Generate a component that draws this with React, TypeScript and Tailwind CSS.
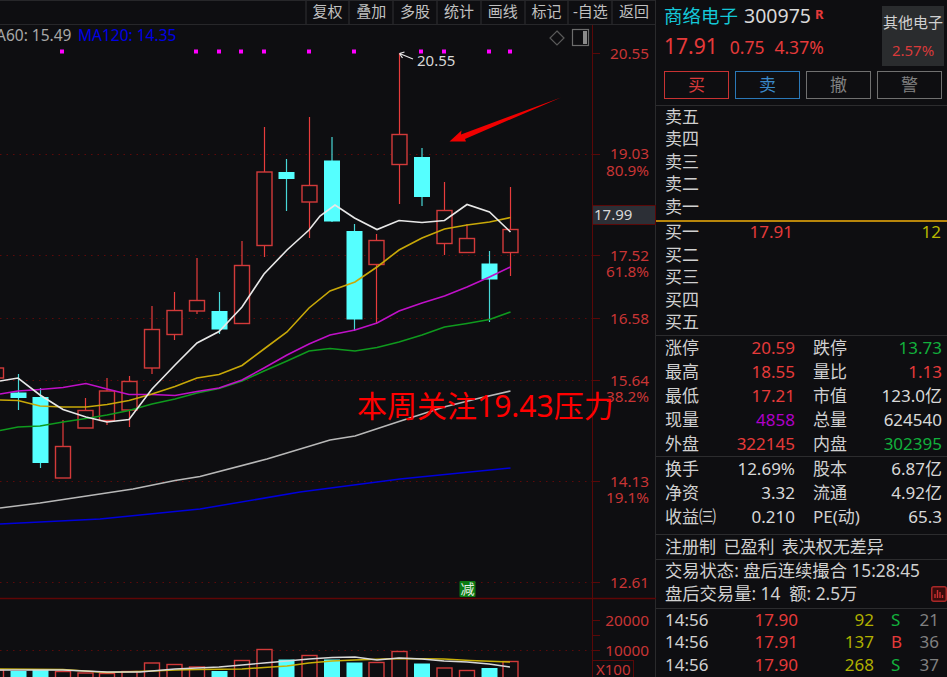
import React from 'react';

interface Candle {
  x: number;
  top: number;
  bottom: number;
  hi: number;
  lo: number;
  up: boolean;
}

const candles: Candle[] = [
  { x: -4, top: 368, bottom: 378, hi: 368, lo: 378, up: true },
  { x: 18.5, top: 392.5, bottom: 398, hi: 374, lo: 410, up: false },
  { x: 40.5, top: 397, bottom: 463, hi: 388, lo: 468, up: false },
  { x: 63, top: 446.5, bottom: 478, hi: 420, lo: 478, up: true },
  { x: 85.5, top: 410.5, bottom: 428, hi: 398, lo: 428, up: true },
  { x: 107, top: 391, bottom: 420.5, hi: 378, lo: 425, up: true },
  { x: 129.5, top: 381.5, bottom: 410, hi: 376, lo: 427, up: true },
  { x: 152, top: 329.5, bottom: 368, hi: 306, lo: 374, up: true },
  { x: 174.5, top: 310.5, bottom: 334.5, hi: 292, lo: 340, up: true },
  { x: 197, top: 300.5, bottom: 311, hi: 258, lo: 314, up: true },
  { x: 219.5, top: 311, bottom: 329.5, hi: 292, lo: 334, up: false },
  { x: 242, top: 265.5, bottom: 323.5, hi: 241, lo: 323, up: true },
  { x: 264.5, top: 172, bottom: 245.5, hi: 127, lo: 257, up: true },
  { x: 286.5, top: 172, bottom: 179, hi: 159, lo: 211, up: false },
  { x: 309.5, top: 185.5, bottom: 202, hi: 117, lo: 238, up: true },
  { x: 332, top: 160.5, bottom: 221.5, hi: 137, lo: 222, up: false },
  { x: 354.5, top: 231, bottom: 319.5, hi: 224, lo: 331, up: false },
  { x: 376.5, top: 240.5, bottom: 264.5, hi: 234, lo: 323, up: true },
  { x: 399.5, top: 134.5, bottom: 164.5, hi: 53, lo: 204, up: true },
  { x: 422, top: 157, bottom: 197, hi: 148, lo: 206, up: false },
  { x: 444.5, top: 210.5, bottom: 243.5, hi: 182, lo: 255, up: true },
  { x: 467, top: 238.5, bottom: 252.5, hi: 224, lo: 252, up: true },
  { x: 489.5, top: 263.5, bottom: 279.5, hi: 251, lo: 322, up: false },
  { x: 510.5, top: 229.5, bottom: 252.5, hi: 187, lo: 276, up: true },
];

const volumeTops = [670, 671, 670, 671.5, 673, 673.5, 671.5, 663, 664.5, 667, 671, 660.5, 649.5, 659.5, 655.5, 659.5, 662.5, 662.5, 651.5, 663.5, 668, 670.5, 668, 661.5];

const ma5 = '0,381 18,378 40,395 63,409.5 86,417 107,422 129,419.5 152,389 175,365 197,343 219,331.5 242,307 264,274 287,250 309,230 320,216 335,205 354.5,218 377,229.5 399,220.5 422,222.5 444.5,220.5 467,204.5 489.5,212 510.5,232';
const ma10 = '0,400 18,400.5 40,406 63,407 86,407 107,404.5 129,400.5 152,394 175,386.5 197,378 219,374.5 242,365.5 264,349 287,332 309,308 330,291 355,282 377,267 399,250 422,238 444.5,229 467,225 489.5,222 510.5,217.5';
const ma20 = '0,394 18,391 40,389.5 63,387.5 86,383.5 107,389 129,394.5 152,394.5 175,395.5 197,391.5 219,388 242,380 264,368 287,355 309,344 330,335 355,330 377,323 399,311 422,303 444.5,296 467,287 489.5,277 510.5,267';
const ma30 = '0,430.5 18,427 40,426 63,422 86,418.5 107,415 129,410.5 152,404 175,399 197,393 219,388.5 242,381 264,371 287,361 309,351 330,348.5 355,351 377,347.5 399,342 422,335 444.5,327 467,323.5 489.5,319.5 510.5,312';
const ma60 = '0,508 40,503 80,497 133,489 175,480.5 200,476.5 267,459 330,440 355,436 399,421.5 444,407 480,398 510.5,391';
const ma120 = '0,524 100,519 200,509 300,492 400,479 510.5,468';
const volWhite = '0,670 40,670 63,670 85,671 107,672 140,672 175,669 197,668 219,667 242,665 264,663 287,661 309,659 332,657.5 355,657 377,660 399,658 422,659 444,661 467,662 489,664 510,667';
const volYellow = '0,669 63,669.5 85,671 107,672.5 152,671 175,670 197,669.5 242,669 264,667.5 287,666 309,663 332,661 355,660 399,658.5 444,659 470,660.5 510,662';

const dots = [62, 196, 219, 241, 264, 309, 354, 421, 444, 489, 510];
const gridLines = [154.5, 255.5, 318.5, 380.5, 481.5, 582.5, 650.5];
const axisLabels: [string, number][] = [
  ['20.55', 53], ['19.03', 153], ['80.9%', 170], ['17.52', 255], ['61.8%', 271], ['16.58', 318],
  ['15.64', 380], ['38.2%', 396], ['14.13', 481], ['19.1%', 497], ['12.61', 582], ['20000', 620], ['10000', 650],
];
const axisTicks = [53, 154, 255, 318, 380, 481, 582, 620, 635, 650];

const tools = ['复权', '叠加', '多股', '统计', '画线', '标记', '-自选', '返回'];

const stats1 = [
  ['涨停', '20.59', 'text-[#e53a3a]', '跌停', '13.73', 'text-[#12b03c]'],
  ['最高', '18.55', 'text-[#e53a3a]', '量比', '1.13', 'text-[#e53a3a]'],
  ['最低', '17.21', 'text-[#e53a3a]', '市值', '123.0亿', 'text-[#d8d8d8]'],
  ['现量', '4858', 'text-[#b000c8]', '总量', '624540', 'text-[#d8d8d8]'],
  ['外盘', '322145', 'text-[#e53a3a]', '内盘', '302395', 'text-[#12b03c]'],
];
const stats2 = [
  ['换手', '12.69%', 'text-[#d8d8d8]', '股本', '6.87亿', 'text-[#d8d8d8]'],
  ['净资', '3.32', 'text-[#d8d8d8]', '流通', '4.92亿', 'text-[#d8d8d8]'],
  ['收益㈢', '0.210', 'text-[#d8d8d8]', 'PE(动)', '65.3', 'text-[#d8d8d8]'],
];
const ticks = [
  ['14:56', '17.90', '92', 'S', '21'],
  ['14:56', '17.91', '137', 'B', '36'],
  ['14:56', '17.90', '268', 'S', '37'],
];

const Chart = () => (
  <svg viewBox="0 25 656 652" width={656} height={652} className="block">
    {gridLines.map((y) => (
      <line key={y} x1={0} x2={592} y1={y} y2={y} stroke="#5c0a0a" strokeWidth={1} strokeDasharray="1.5 5" />
    ))}
    <line x1={592.5} x2={592.5} y1={25} y2={677} stroke="#5a0808" />
    <line x1={0} x2={656} y1={598.5} y2={598.5} stroke="#5f0606" strokeWidth={1.3} />
    {axisTicks.map((y) => (
      <line key={y} x1={592} x2={600} y1={y + 0.5} y2={y + 0.5} stroke="#5a0808" />
    ))}
    {dots.map((x) => (
      <rect key={x} x={x - 2} y={49.5} width={4} height={4} fill="#ff00ff" />
    ))}
    {candles.map((c) =>
      c.up ? (
        <g key={c.x}>
          <line x1={c.x} x2={c.x} y1={c.hi} y2={c.top} stroke="#e83c3c" strokeWidth={1.2} />
          <line x1={c.x} x2={c.x} y1={c.bottom} y2={c.lo} stroke="#e83c3c" strokeWidth={1.2} />
          <rect x={c.x - 7.5} y={c.top} width={15} height={c.bottom - c.top} fill="#0e0e11" stroke="#d23a3a" strokeWidth={1.4} />
        </g>
      ) : (
        <g key={c.x}>
          <line x1={c.x} x2={c.x} y1={c.hi} y2={c.lo} stroke="#48d8d8" strokeWidth={1.2} />
          <rect x={c.x - 8} y={c.top} width={16} height={c.bottom - c.top} fill="#55ffff" />
        </g>
      ),
    )}
    <polyline points={ma120} fill="none" stroke="#0000dc" strokeWidth={1.6} />
    <polyline points={ma60} fill="none" stroke="#b8b8b8" strokeWidth={1.6} />
    <polyline points={ma30} fill="none" stroke="#0f9a1e" strokeWidth={1.6} />
    <polyline points={ma20} fill="none" stroke="#c010c8" strokeWidth={1.6} />
    <polyline points={ma10} fill="none" stroke="#c8a808" strokeWidth={1.6} />
    <polyline points={ma5} fill="none" stroke="#e8e8e8" strokeWidth={1.6} />

    {volumeTops.map((top, i) => {
      const c = candles[i];
      return c.up ? (
        <rect key={c.x} x={c.x - 7.5} y={top} width={15} height={682 - top} fill="#0e0e11" stroke="#d23a3a" strokeWidth={1.4} />
      ) : (
        <rect key={c.x} x={c.x - 8} y={top} width={16} height={682 - top} fill="#55ffff" />
      );
    })}
    <polyline points={volYellow} fill="none" stroke="#c8b008" strokeWidth={1.4} />
    <polyline points={volWhite} fill="none" stroke="#d8d8d8" strokeWidth={1.4} />

    {/* peak marker */}
    <path d="M413 59 L399.5 53.5 M399.5 53.5 L404.5 52 M399.5 53.5 L402.5 58" fill="none" stroke="#e8e8e8" strokeWidth={1.2} />
    <text x={417} y={66} fill="#d8d8d8" fontSize={15}>20.55</text>

    {/* drawn arrow */}
    <polygon points="449.5,141.5 461.5,130.5 461,134.5 561,97.5 465,139 466,141.5" fill="#f00000" />

    <text x={-4} y={41} fill="#a8a8a8" fontSize={15.5}>A60: 15.49</text>
    <text x={78} y={41} fill="#0000e6" fontSize={15.5}>MA120: 14.35</text>

    <path d="M557 31 L564 38 L557 45 L550 38 Z" fill="none" stroke="#5a5a5a" strokeWidth={1.2} />
    <rect x={572.5} y={29.5} width={16} height={16} fill="none" stroke="#6c6c6c" strokeWidth={1.2} />
    <rect x={583} y={31} width={4} height={13} fill="#8a8a8a" />

    {axisLabels.map(([label, y]) => (
      <text key={label} x={649} y={y + 5.5} textAnchor="end" fill="#c83535" fontSize={15.3}>{label}</text>
    ))}

    <rect x={592.5} y={205.5} width={63} height={19} fill="#2c2f36" stroke="#5a0808" />
    <text x={594} y={220} fill="#d8d8d8" fontSize={15}>17.99</text>
    <rect x={592.5} y={660.5} width={41} height={20} fill="none" stroke="#5a0808" />
    <text x={596} y={675} fill="#c83535" fontSize={15}>X100</text>

    <rect x={459.5} y={581} width={16} height={16} rx={1} fill="#0a7a12" />
    <text x={467.5} y={594} textAnchor="middle" fill="#e8f0e8" fontSize={14}>减</text>

    <text x={357} y={417} fill="#ff0000" fontSize={30}>本周关注19.43压力</text>
  </svg>
);

const StatRows = ({ rows }: { rows: string[][] }) => (
  <>
    {rows.map((r) => (
      <div key={r[0]} className="flex h-6 items-center pb-px text-[17px] leading-none">
        <span className="w-[9px]" />
        <span className="w-[54px] text-[#d0d0d0] whitespace-nowrap">{r[0]}</span>
        <span className={`w-[76px] text-right ${r[2]}`}>{r[1]}</span>
        <span className="w-[18px]" />
        <span className="w-[54px] text-[#d0d0d0] whitespace-nowrap">{r[3]}</span>
        <span className={`w-[75px] text-right ${r[5]}`}>{r[4]}</span>
      </div>
    ))}
  </>
);

const Divider = () => <div className="h-px bg-[#2c2c2e]" />;

export default function App() {
  return (
    <div className="flex h-[677px] w-[947px] overflow-hidden bg-[#0e0e11] font-['Noto_Sans','Noto_Sans_CJK_SC',sans-serif] text-[#d0d0d0]">
      <div className="flex w-[656px] shrink-0 flex-col border-r border-[#2a2a2c]">
        <div className="flex h-[25px] shrink-0 justify-end border-y border-[#27272a]">
          {tools.map((t) => (
            <span key={t} className="flex w-[43.8px] items-center justify-center border-l-2 border-[#1f1f22] pb-[2px] text-[15px] leading-none text-[#c0c0c0]">
              {t}
            </span>
          ))}
        </div>
        <Chart />
      </div>

      <div className="flex w-[291px] flex-col">
        <div className="relative h-[105px] shrink-0">
          <div className="flex items-center pl-[8px] pt-[5px] leading-[22px]">
            <span className="text-[18.5px] text-[#14c8d8]">商络电子</span>
            <span className="ml-[6px] text-[19.5px] text-[#d8d8d8]">300975</span>
            <span className="ml-[4px] -translate-y-[2px] text-[13px] font-bold text-[#e53a3a]">R</span>
          </div>
          <div className="mt-[8px] flex items-baseline pl-[8px] leading-[22px] text-[#e53a3a]">
            <span className="text-[21px]">17.91</span>
            <span className="ml-[12px] text-[17.5px]">0.75</span>
            <span className="ml-[10px] text-[17.5px]">4.37%</span>
          </div>
          <div className="absolute left-[226px] top-[6px] flex h-[60px] w-[62px] flex-col items-center justify-around bg-[#2a2c2e] py-[2px] text-[15px]">
            <span className="whitespace-nowrap text-[#d0d0d0]">其他电子</span>
            <span className="text-[#d83a3a]">2.57%</span>
          </div>
          <div className="absolute left-[8px] top-[71px] flex gap-[6px]">
            <span className="flex h-[28px] w-[65px] items-center justify-center border border-[#c83232] text-[17px] text-[#d83a3a]">买</span>
            <span className="flex h-[28px] w-[65px] items-center justify-center border border-[#2a78b8] text-[17px] text-[#3a88c8]">卖</span>
            <span className="flex h-[28px] w-[65px] items-center justify-center border border-[#707070] text-[17px] text-[#808080]">撤</span>
            <span className="flex h-[28px] w-[65px] items-center justify-center border border-[#707070] text-[17px] text-[#808080]">警</span>
          </div>
        </div>
        <Divider />

        <div className="h-[114px] pl-[9px] text-[17px]">
          {['卖五', '卖四', '卖三', '卖二', '卖一'].map((t) => (
            <div key={t} className="flex h-[22.5px] items-center pb-[2px] leading-none">{t}</div>
          ))}
        </div>
        <div className="h-[1.5px] bg-[#b8860b]" />
        <div className="h-[113.5px] pl-[9px] text-[17px]">
          <div className="flex h-[22.5px] items-center pb-[2px] leading-none">
            <span className="w-[54px]">买一</span>
            <span className="w-[74px] text-right text-[#e53a3a]">17.91</span>
            <span className="w-[148px] text-right text-[#b8b800]">12</span>
          </div>
          {['买二', '买三', '买四', '买五'].map((t) => (
            <div key={t} className="flex h-[22.5px] items-center pb-[2px] leading-none">{t}</div>
          ))}
        </div>
        <Divider />

        <StatRows rows={stats1} />
        <Divider />
        <div className="h-[77px]">
          <StatRows rows={stats2} />
        </div>
        <Divider />

        <div className="flex h-6 items-center pl-[9px] pb-[2px] text-[17px] leading-none [word-spacing:3px]">注册制 已盈利 表决权无差异</div>
        <Divider />

        <div className="relative h-[48px] pl-[9px] text-[17.3px]">
          <div className="flex h-[23px] items-center pb-[2px] leading-none">交易状态: 盘后连续撮合 15:28:45</div>
          <div className="flex h-6 items-center pb-[2px] leading-none">盘后交易量: 14&nbsp;&nbsp;额: 2.5万</div>
          <svg viewBox="0 0 16 16" width={16} height={16} className="absolute right-0 top-[26px]">
            <rect x={0.75} y={0.75} width={14.5} height={14.5} rx={2} fill="#3a0c0c" stroke="#a82828" strokeWidth={1.5} />
            <path d="M4 12V8 M6.5 12V4 M9 12V6 M11.5 12V9" stroke="#c83030" strokeWidth={1.4} />
          </svg>
        </div>
        <Divider />

        {ticks.map((t, i) => (
          <div key={i} className="flex h-[22.5px] shrink-0 items-center pb-[2px] text-[17px] leading-none">
            <span className="w-[9px]" />
            <span className="w-[60px]">{t[0]}</span>
            <span className="w-[73px] text-right text-[#e53a3a]">{t[1]}</span>
            <span className="w-[76px] text-right text-[#b0b000]">{t[2]}</span>
            <span className={`ml-[17px] w-[24px] ${t[3] === 'S' ? 'text-[#12b03c]' : 'text-[#e53a3a]'}`}>{t[3]}</span>
            <span className="w-[24px] text-right text-[#808080]">{t[4]}</span>
          </div>
        ))}
      </div>
    </div>
  );
}
